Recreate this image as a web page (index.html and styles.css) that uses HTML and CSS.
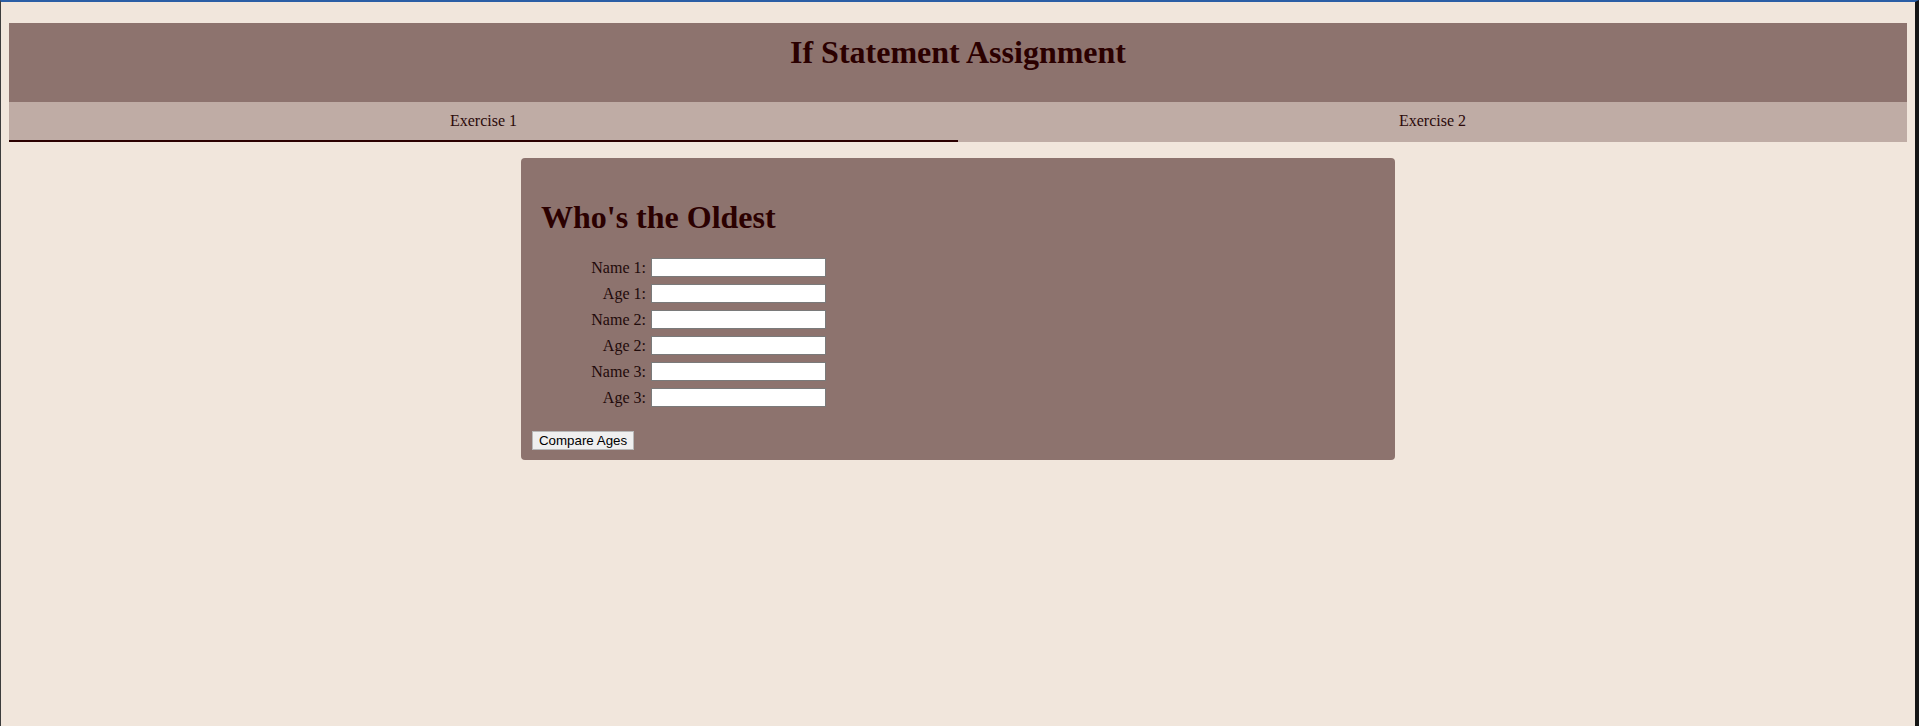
FILE: index.html
```html
<!DOCTYPE html>
<html lang="en">
<head>
<meta charset="utf-8">
<title>If Statement Assignment</title>
<link rel="stylesheet" href="styles.css">
</head>
<body>
  <header class="site-header">
    <h1 class="site-title">If Statement Assignment</h1>
  </header>
  <nav class="tabs">
    <div class="tab tab-active">Exercise 1</div>
    <div class="tab">Exercise 2</div>
  </nav>
  <main class="card">
    <div class="group">
      <h2 class="card-title">Who's the Oldest</h2>
      <div class="fields">
        <label class="field-label" for="n1">Name 1:</label><input class="field-input" id="n1" type="text">
        <label class="field-label" for="a1">Age 1:</label><input class="field-input" id="a1" type="text">
        <label class="field-label" for="n2">Name 2:</label><input class="field-input" id="n2" type="text">
        <label class="field-label" for="a2">Age 2:</label><input class="field-input" id="a2" type="text">
        <label class="field-label" for="n3">Name 3:</label><input class="field-input" id="n3" type="text">
        <label class="field-label" for="a3">Age 3:</label><input class="field-input" id="a3" type="text">
      </div>
    </div>
    <button class="compare-btn" type="button">Compare Ages</button>
  </main>
</body>
</html>
```
FILE: styles.css
```css
html {
  box-sizing: border-box;
  height: 100%;
  background: #f1e6dc;
  border-top: 2px solid #2b5ea5;
  border-left: 1px solid #3c3c3c;
  border-right: 4px solid #151515;
}

body {
  margin: 21px 8px 8px;
  font-family: "Liberation Serif", "Times New Roman", serif;
  font-size: 16px;
  color: #2b0000;
}

.site-header {
  background: #8d736e;
  padding: 11px 0 31px;
  text-align: center;
}

.site-title {
  margin: 0;
  font-size: 32px;
  font-weight: bold;
  color: #2b0000;
}

.tabs {
  display: flex;
  background: #bfaca5;
}

.tab {
  flex: 1;
  text-align: center;
  padding: 10px 0;
  border-bottom: 2px solid transparent;
  color: #2b0a0a;
}

.tab-active {
  border-bottom-color: #2b0000;
}

.card {
  width: 45%;
  margin: 16px auto 0;
  padding: 10px;
  background: #8d736e;
  border-radius: 4px;
}

.group {
  padding: 10px 10px 0;
}

.card-title {
  margin: 21px 0 22px;
  font-size: 32px;
  font-weight: bold;
  color: #2b0000;
}

.fields {
  display: grid;
  grid-template-columns: 105px 175px;
  column-gap: 5px;
  row-gap: 7px;
  align-items: center;
}

.field-label {
  text-align: right;
  color: #1f0a0a;
}

.field-input {
  box-sizing: border-box;
  width: 175px;
  height: 19px;
  margin: 0;
  padding: 1px 2px;
  border: 1px solid #7a7a7a;
  background: #ffffff;
  font-family: "Liberation Sans", Arial, sans-serif;
  font-size: 13.33px;
}

.compare-btn {
  display: block;
  margin: 24px 0 0 1px;
  padding: 1px 6px;
  border: 1px solid #b8b8b8;
  border-radius: 0;
  background: #efefef;
  color: #000000;
  font-family: "Liberation Sans", Arial, sans-serif;
  font-size: 13.33px;
  line-height: normal;
}
```
